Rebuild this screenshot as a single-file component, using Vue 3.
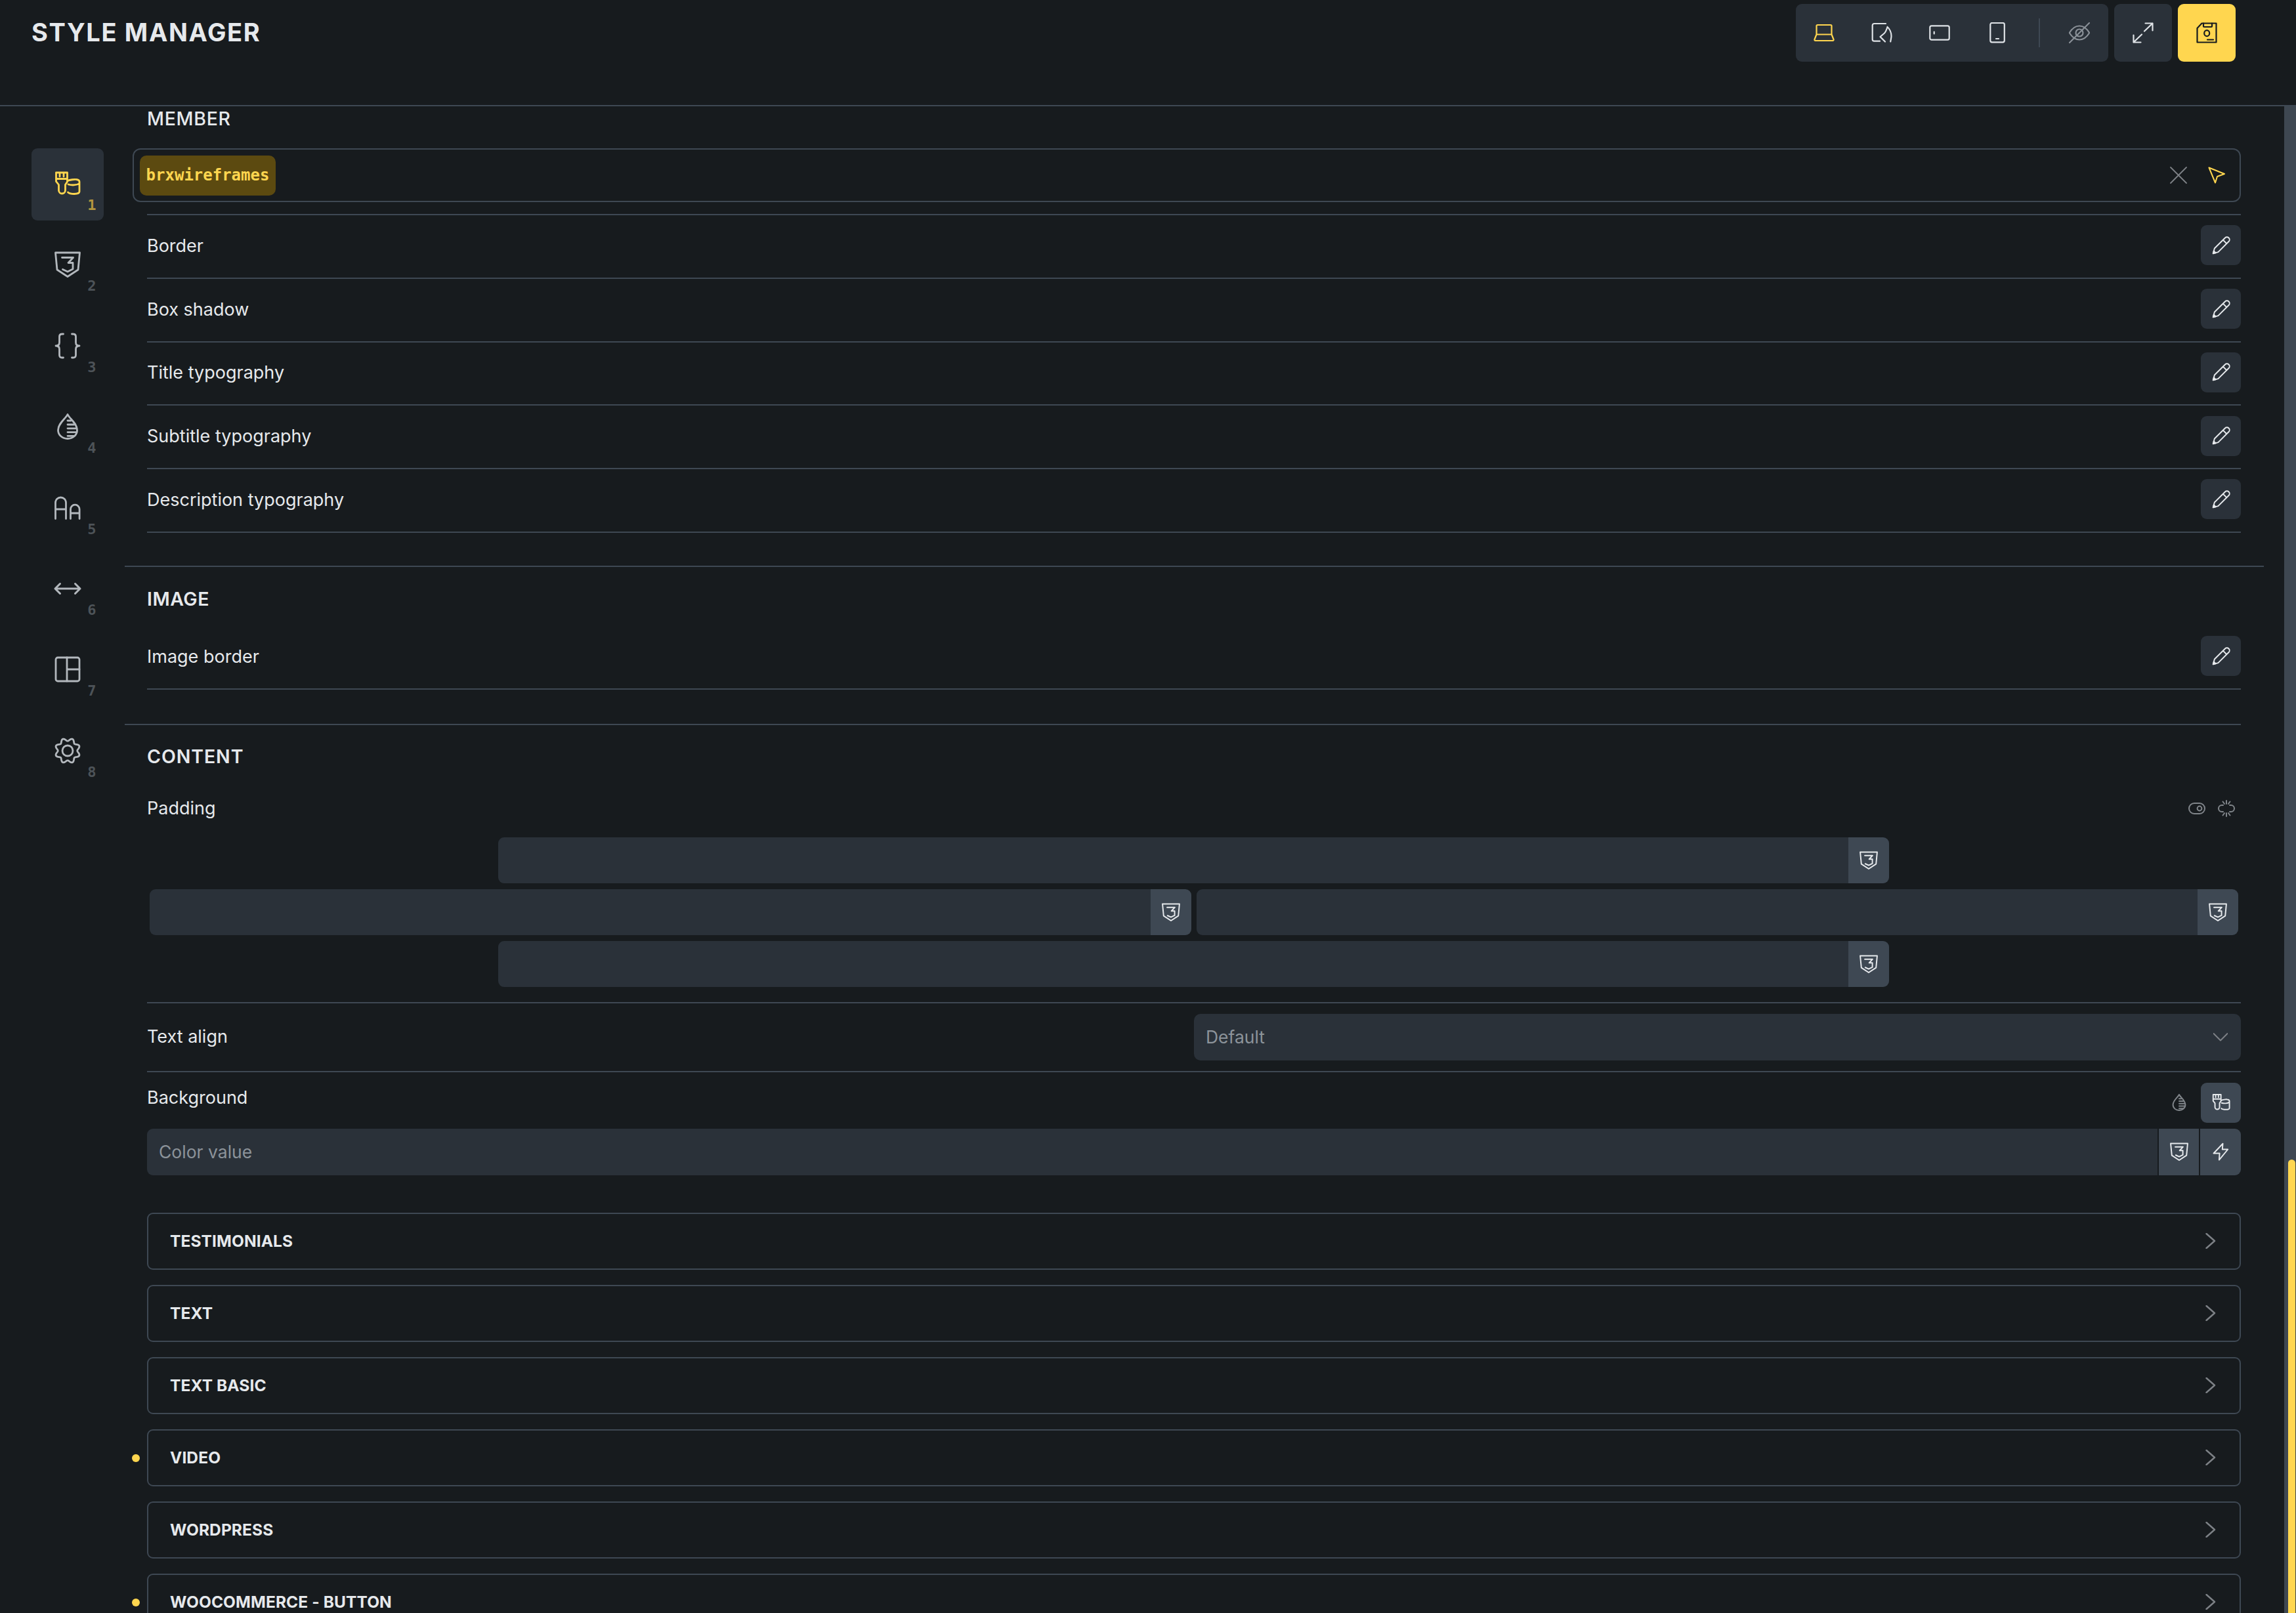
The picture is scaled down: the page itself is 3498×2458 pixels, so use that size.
<script setup>
const gearPath = (() => {
  let d = ''
  for (let i = 0; i <= 200; i++) {
    const t = (i / 200) * Math.PI * 2
    const r = 17 + 2.2 * Math.cos(8 * t + Math.PI)
    d += (i ? 'L' : 'M') + (20 + r * Math.sin(t)).toFixed(2) + ' ' + (20 - r * Math.cos(t)).toFixed(2)
  }
  return d + 'Z'
})()
const navItems = [
  { icon: 'brush', n: 1, active: true },
  { icon: 'css', n: 2 },
  { icon: 'braces', n: 3 },
  { icon: 'drop', n: 4 },
  { icon: 'type', n: 5 },
  { icon: 'arrows', n: 6 },
  { icon: 'layout', n: 7 },
  { icon: 'gear', n: 8 }
]
const memberRows = ['Border', 'Box shadow', 'Title typography', 'Subtitle typography', 'Description typography']
const panels = [
  { name: 'TESTIMONIALS' },
  { name: 'TEXT' },
  { name: 'TEXT BASIC' },
  { name: 'VIDEO', dot: true },
  { name: 'WORDPRESS' },
  { name: 'WOOCOMMERCE - BUTTON', dot: true }
]
</script>

<template>
  <div class="app">
    <svg class="sprite" aria-hidden="true">
      <symbol id="i-brush" viewBox="0 0 40 40" overflow="visible"><path d="M2.500 3H19.500V17L16.500 21.500V30a5 5 0 0 1-10 0V21.500L2.500 16.500zM2.500 12.500H19.500M8 3v6M14 3v6" /><path d="M20 15.500C23 14 31 13 33 13.500c3 .2 5 1.500 5 3.500V32c0 1.500-2 3.500-8 3.500-5 0-8-1-9.500-2.500M21 21c5 1.500 13 1.500 17-1.500" /></symbol>
      <symbol id="i-css" viewBox="0 0 40 40" overflow="visible"><path d="M1.500 2H38.500L36 28 20 38.500 4 28z" /><path d="M11.500 9.500H28.500L21 17.500H28V27L20 31 12.500 27.500" /></symbol>
      <symbol id="i-braces" viewBox="0 0 40 40" overflow="visible"><path d="M13.500 2h-2C8.500 2 7.500 3.500 7.500 6V15c0 3-2 5-5.500 5 3.500 0 5.500 2 5.500 5v9c0 2.500 1 4 4 4h2M26.500 2h2c3 0 4 1.500 4 4V15c0 3 2 5 5.500 5-3.500 0-5.500 2-5.500 5v9c0 2.500-1 4-4 4h-2" /></symbol>
      <symbol id="i-drop" viewBox="0 0 40 40" overflow="visible"><path d="M20 1.500C17 8 5.500 15 5.500 25.500 5.500 33 12 38.500 20 38.500S34.500 33 34.500 25.500C34.500 15 23 8 20 1.500z" /><path d="M20 11h5M20 17h10M20 22.800h14M20 28.600h14M20 34.300h10" /></symbol>
      <symbol id="i-type" viewBox="0 0 40 40" overflow="visible"><path d="M1.500 36.500V12a8 8 0 0 1 16 0V36.500M1.500 22H17.500M24.500 36.500V22a6.800 6.800 0 0 1 13.600 0V36.500M24.500 28H38" /></symbol>
      <symbol id="i-arrows" viewBox="0 0 40 40" overflow="visible"><path d="M1 20H39M8.500 12.500L1 20l7.500 7.500M31.500 12.500L39 20l-7.500 7.500" /></symbol>
      <symbol id="i-layout" viewBox="0 0 40 40"><rect x="2" y="2" width="36" height="36" rx="3" /><path d="M19 2v36M19 20h19" /></symbol>
      <symbol id="i-gear" viewBox="0 0 40 40" overflow="visible"><path :d="gearPath" /><circle cx="20" cy="20" r="8" /></symbol>
      <symbol id="i-laptop" viewBox="0 0 32 32"><path d="M4.500 18.500V5.500A1.500 1.500 0 0 1 6 4h20a1.500 1.500 0 0 1 1.500 1.500v13M4.500 18.500h23l3 7.500c.3 1-.3 2-1.300 2H2.800c-1 0-1.600-1-1.300-2z" /></symbol>
      <symbol id="i-hand" viewBox="0 0 32 32"><path d="M22 2H4.500C2.800 2 1.700 3 1.700 4.700v21.300c0 1.700 1.100 2.700 2.800 2.700H13" /><path d="M24.500 7C23 12 22 15 19.500 17L13.500 22l7.500 7.500M24.500 7C28 10 30.500 16 30.500 21c0 3-1 6-1.300 8.500" /></symbol>
      <symbol id="i-tablet" viewBox="0 0 32 32"><rect x="1.300" y="5.300" width="29.400" height="21.400" rx="2.500" /><path d="M7.700 14.500v3" /></symbol>
      <symbol id="i-phone" viewBox="0 0 32 32"><rect x="5.300" y="1" width="21.500" height="29.300" rx="2.500" /><path d="M14 25h4" /></symbol>
      <symbol id="i-eyeoff" viewBox="0 0 32 32"><path d="M.8 16C5 9 10 5.500 16 5.500S27 9 31.200 16C27 23 22 26.500 16 26.500S5 23 .8 16z" /><circle cx="16" cy="16" r="5.500" /><path d="M31 1L1 31" /></symbol>
      <symbol id="i-expand" viewBox="0 0 32 32"><path d="M18 13.500L30.500 1.500M19.500 1.500h11v11M14 18.500L1.500 30.500M1.500 19.500v11h11" /></symbol>
      <symbol id="i-save" viewBox="0 0 32 32"><path d="M8.500 1.500H30.500V30.500H1.500V9z" /><path d="M11 1.500v4.500c0 .5.500 1 1 1h11c.5 0 1-.5 1-1V1.500" /><ellipse cx="16.200" cy="16.700" rx="4" ry="4.500" /><path d="M17 26.500h9" /></symbol>
      <symbol id="i-close" viewBox="0 0 26 26"><path d="M1 1l24 24M25 1L1 25" /></symbol>
      <symbol id="i-cursor" viewBox="0 0 26 26"><path d="M1.500 1.500L25 11 14 15 11 24.500z" /></symbol>
      <symbol id="i-pencil" viewBox="0 0 40 40" overflow="visible"><path d="M28.500 3.500a5.200 5.200 0 0 1 8 8L13.500 34.500 2.500 37.500 5.500 26.500zM24 8l8 8" /><path d="M2.500 37.500l1.500-5.500 4 4z" fill="currentColor" /></symbol>
      <symbol id="i-toggle" viewBox="0 0 26 26"><rect x="1" y="5" width="24" height="16" rx="8" /><circle cx="17" cy="13" r="3.400" /></symbol>
      <symbol id="i-link" viewBox="0 0 26 26"><path d="M8 8H6a5 5 0 0 0 0 10h2M18 8h2a5 5 0 0 1 0 10h-2M13 1v5M7.500 2.500l2.500 3.500M18.500 2.500l-2.500 3.500M13 25v-5M7.500 23.500l2.500-3.500M18.500 23.500l-2.500-3.500" /></symbol>
      <symbol id="i-bolt" viewBox="0 0 40 40"><path d="M25 2.500L5 23.500H18L17 38 36 15H24z" /></symbol>
      <symbol id="i-down" viewBox="0 0 24 24"><path d="M.5 6.500L12 18 23.500 6.500" /></symbol>
      <symbol id="i-right" viewBox="0 0 24 24"><path d="M5.500 1L18 12 5.500 23" /></symbol>
    </svg>

    <header class="topbar">
      <h1 class="title">STYLE MANAGER</h1>
      <div class="actions">
        <div class="group">
          <span class="tool on"><svg class="ico-tool"><use href="#i-laptop" /></svg></span>
          <span class="tool"><svg class="ico-tool"><use href="#i-hand" /></svg></span>
          <span class="tool"><svg class="ico-tool"><use href="#i-tablet" /></svg></span>
          <span class="tool"><svg class="ico-tool"><use href="#i-phone" /></svg></span>
          <span class="sep"></span>
          <span class="tool dim"><svg class="ico-tool"><use href="#i-eyeoff" /></svg></span>
        </div>
        <span class="tool boxed"><svg class="ico-tool"><use href="#i-expand" /></svg></span>
        <span class="tool boxed save"><svg class="ico-tool"><use href="#i-save" /></svg></span>
      </div>
    </header>

    <div class="body">
      <nav class="side">
        <div v-for="item in navItems" :key="item.n" class="nav" :class="{ active: item.active }">
          <svg class="ico-nav" :class="{ thick: item.icon === 'arrows' }"><use :href="'#i-' + item.icon" /></svg>
          <span class="num">{{ item.n }}</span>
        </div>
      </nav>

      <main class="main">
        <div class="heading first">MEMBER</div>
        <div class="token">
          <span class="chip">brxwireframes</span>
          <span class="token-tools">
            <svg class="ico-x"><use href="#i-close" /></svg>
            <svg class="ico-cursor"><use href="#i-cursor" /></svg>
          </span>
        </div>
        <div class="rows">
          <div v-for="r in memberRows" :key="r" class="row">
            <span class="label">{{ r }}</span>
            <span class="btn soft"><svg class="ico-sm"><use href="#i-pencil" /></svg></span>
          </div>
        </div>

        <div class="rule long"></div>
        <div class="heading image">IMAGE</div>
        <div class="row solo">
          <span class="label">Image border</span>
          <span class="btn soft"><svg class="ico-sm"><use href="#i-pencil" /></svg></span>
        </div>

        <div class="rule"></div>
        <div class="heading content">CONTENT</div>
        <div class="pad-head">
          <span class="label">Padding</span>
          <span class="pad-tools">
            <svg class="ico-small"><use href="#i-toggle" /></svg>
            <svg class="ico-small"><use href="#i-link" /></svg>
          </span>
        </div>
        <div class="pad-grid">
          <div class="field pad-top"><span class="fill"></span><span class="addon"><svg class="ico-sm"><use href="#i-css" /></svg></span></div>
          <div class="pad-mid">
            <div class="field"><span class="fill"></span><span class="addon"><svg class="ico-sm"><use href="#i-css" /></svg></span></div>
            <div class="field"><span class="fill"></span><span class="addon"><svg class="ico-sm"><use href="#i-css" /></svg></span></div>
          </div>
          <div class="field pad-top"><span class="fill"></span><span class="addon"><svg class="ico-sm"><use href="#i-css" /></svg></span></div>
        </div>

        <div class="align-row">
          <span class="label">Text align</span>
          <div class="select">
            <span>Default</span>
            <svg class="ico-down"><use href="#i-down" /></svg>
          </div>
        </div>

        <div class="bg-block">
          <div class="bg-head">
            <span class="label bg-label">Background</span>
            <span class="bg-tools">
              <svg class="ico-drop"><use href="#i-drop" /></svg>
              <span class="btn"><svg class="ico-sm"><use href="#i-brush" /></svg></span>
            </span>
          </div>
          <div class="color">
            <span class="fill ph">Color value</span>
            <span class="addon flat"><svg class="ico-sm"><use href="#i-css" /></svg></span>
            <span class="addon"><svg class="ico-sm"><use href="#i-bolt" /></svg></span>
          </div>
        </div>

        <div class="panels">
          <div v-for="p in panels" :key="p.name" class="panel">
            <span v-if="p.dot" class="dot"></span>
            <span class="panel-name">{{ p.name }}</span>
            <svg class="ico-right"><use href="#i-right" /></svg>
          </div>
        </div>
      </main>

      <div class="scroll"><span class="thumb"></span></div>
    </div>
  </div>
</template>

<style>
html, body { margin: 0; background: #171b1e; }
</style>

<style scoped>
.sprite { position: absolute; width: 0; height: 0; overflow: hidden; }
svg { fill: none; stroke: currentColor; stroke-width: 2.800; stroke-linecap: round; stroke-linejoin: round; display: block; flex: none; overflow: visible; }

.app {
  width: 3498px; height: 2458px; overflow: hidden;
  background: #171b1e; color: #e6e9ec;
  font-family: Inter, "Liberation Sans", sans-serif;
  display: flex; flex-direction: column;
}
.topbar {
  height: 160px; flex: none;
  border-bottom: 2px solid #3e4853;
  display: flex; justify-content: space-between; align-items: flex-start;
  padding: 0 92px 0 48px;
}
.title { margin: 28px 0 0; font-size: 38px; line-height: 42px; font-weight: 700; color: #e6e9ec; letter-spacing: 1.650px; }
.actions { display: flex; gap: 9px; margin-top: 6px; }
.group { display: flex; align-items: center; width: 476px; height: 88px; background: #2a3139; border-radius: 9px; }
.tool { width: 88px; height: 88px; display: flex; align-items: center; justify-content: center; color: #dfe3e7; flex: none; }
.group .tool:first-child { margin-left: -1px; }
.tool.on { color: #ffd64f; }
.tool.dim { color: #8a9097; margin-left: 16px; }
.tool.boxed { background: #2a3139; border-radius: 9px; }
.tool.save { background: #ffd64f; color: #171b1e; }
.sep { width: 2px; height: 44px; background: #3e4853; margin-left: 19px; flex: none; }
.ico-tool { width: 32px; height: 32px; stroke-width: 2.200; }

.body { flex: 1; display: flex; min-height: 0; }
.side { width: 190px; flex: none; padding: 64px 32px 0 48px; box-sizing: border-box; display: flex; flex-direction: column; gap: 13.400px; }
.nav { width: 110px; height: 110px; border-radius: 9px; position: relative; display: flex; align-items: center; justify-content: center; color: #b3b8bd; }
.nav.active { background: #2a3139; color: #ffd64f; }
.ico-nav { width: 40px; height: 40px; margin-bottom: 2px; }
.ico-nav.thick { stroke-width: 3; }
.num { position: absolute; right: 11.500px; bottom: 11px; font: 700 22px/24px "DejaVu Sans Mono", monospace; color: #4d5358; }
.nav.active .num { color: #b3963f; }

.main { flex: 1; min-width: 0; padding-right: 66px; box-sizing: border-box; }
.heading { font-size: 28.500px; line-height: 34px; font-weight: 500; padding-left: 34px; letter-spacing: .7px; }
.heading.first { height: 36px; margin-bottom: 28px; line-height: 37px; }
.heading.image { margin-top: 32.500px; font-weight: 600; letter-spacing: .5px; }
.heading.content { margin-top: 31.500px; font-weight: 600; letter-spacing: .9px; }
.token {
  margin-left: 12px; height: 82px; box-sizing: border-box;
  border: 2px solid #3e4853; border-radius: 12px;
  display: flex; align-items: center; justify-content: space-between; padding: 0 22px 0 9px;
}
.chip { height: 61px; width: 207px; box-sizing: border-box; border-radius: 10px; background: #5c4a10; color: #ffd64f; font: 700 24px/61px "DejaVu Sans Mono", monospace; text-align: center; }
.token-tools { display: flex; align-items: center; gap: 32px; }
.ico-x { width: 26px; height: 26px; color: #7d8186; stroke-width: 1.800; }
.ico-cursor { width: 26px; height: 26px; color: #ffd64f; stroke-width: 2; }
.rows { margin: 18px 0 0 34px; border-top: 2px solid #3e4853; }
.row { height: 96.750px; box-sizing: border-box; border-bottom: 2px solid #3e4853; padding-bottom: 3px; display: flex; align-items: center; justify-content: space-between; }
.row .label { padding-top: 2px; }
.row.solo { margin-left: 34px; margin-top: 23.750px; }
.label { font-size: 27px; line-height: 34px; font-weight: 400; color: #e6e9ec; }
.btn { width: 61px; height: 61px; border-radius: 9px; background: #3e4853; display: flex; align-items: center; justify-content: center; color: #e6e9ec; flex: none; }
.btn.soft { background: #2a3139; }
.ico-sm { width: 28px; height: 28px; }
.rule { height: 2px; background: #3e4853; margin-top: 52px; }
.rule.long { margin-top: 50px; margin-right: -35px; }

.pad-head { display: flex; justify-content: space-between; align-items: center; margin: 44.500px 0 0 34px; height: 34px; }
.pad-tools { display: flex; align-items: center; gap: 19px; padding-right: 9px; color: #80858a; }
.ico-small { width: 26px; height: 26px; stroke-width: 2; }
.pad-grid { margin: 27px 0 0 38px; display: flex; flex-direction: column; gap: 9px; }
.field { height: 70px; display: flex; border-radius: 9px; overflow: hidden; flex: 1; min-width: 0; }
.fill { flex: 1; background: #2a3139; min-width: 0; }
.addon { width: 62px; background: #3e4853; display: flex; align-items: center; justify-content: center; color: #e6e9ec; flex: none; }
.pad-top { flex: none; width: 2119px; margin-left: 531px; }
.pad-mid { display: flex; gap: 8px; height: 70px; margin-right: 4px; }

.align-row { margin: 23px 0 0 34px; height: 107px; box-sizing: border-box; border-top: 2px solid #3e4853; border-bottom: 2px solid #3e4853; display: flex; align-items: center; justify-content: space-between; }
.select { width: 1595px; height: 71px; border-radius: 10px; background: #2a3139; display: flex; align-items: center; justify-content: space-between; padding: 0 20px 0 18px; box-sizing: border-box; font-size: 26.500px; color: #8c939a; }
.ico-down { width: 22px; height: 22px; color: #7d8186; stroke-width: 2.200; }

.bg-block { margin: 16px 0 0 34px; }
.bg-head { display: flex; justify-content: space-between; align-items: flex-start; height: 61px; }
.bg-label { margin-top: 6px; }
.bg-tools { display: flex; align-items: center; gap: 20px; color: #80858a; }
.ico-drop { width: 26px; height: 26px; stroke-width: 3; }
.color { display: flex; height: 71px; margin-top: 9px; border-radius: 9px; overflow: hidden; gap: 2px; }
.color .fill { font-size: 26.500px; line-height: 71px; color: #8c939a; padding-left: 18px; }
.color .addon.flat { width: 61px; }

.panels { margin: 57px 0 0 34px; display: flex; flex-direction: column; gap: 23px; }
.panel { position: relative; height: 87px; flex: none; box-sizing: border-box; border: 2px solid #3e4853; border-radius: 9px; display: flex; align-items: center; justify-content: space-between; padding: 0 32px 0 33px; }
.panel-name { font-size: 24.500px; font-weight: 700; color: #e6e9ec; letter-spacing: .1px; }
.dot { position: absolute; left: -25px; top: 36px; width: 12px; height: 12px; border-radius: 50%; background: #ffd64f; }
.ico-right { width: 24px; height: 24px; color: #7d8186; stroke-width: 2.400; }

.scroll { width: 18px; flex: none; background: #3e4751; position: relative; }
.thumb { position: absolute; left: 6px; right: 1px; top: 1605px; bottom: 0; background: #ffd64f; border-radius: 6px 6px 0 0; }
</style>
